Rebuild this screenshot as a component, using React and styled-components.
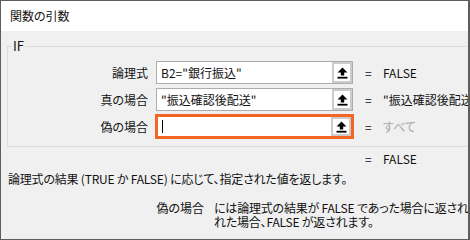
import React from "react";
import styled, { createGlobalStyle } from "styled-components";

const GlobalStyle = createGlobalStyle`
    body {
        margin: 0;
        background: #ffffff;
        font-family: "Noto Sans CJK JP", "Noto Sans", sans-serif;
        font-feature-settings: "palt";
        font-size: 12px;
        color: #111;
    }
`;

const Frame = styled.div`
    width: 470px;
    height: 240px;
    box-sizing: border-box;
    border: 1px solid #5e5e5e;
    border-right-width: 2px;
    background: #f0f0f0;
    overflow: hidden;
`;

const TitleBar = styled.div`
    height: 30px;
    display: flex;
    align-items: center;
    padding-left: 9px;
    background: #ffffff;
    font-size: 12px;
    line-height: 14px;
`;

const Body = styled.div`
    width: 620px;
    padding: 8px 0 0 6px;
`;

const Group = styled.fieldset`
    margin: 0;
    padding: 8px 0 4px 0;
    border: 1px solid #dcdcdc;
    min-width: 0;

    legend {
        margin-left: 4px;
        padding: 0 1px;
        font-size: 13px;
        line-height: 14px;
    }
`;

const Row = styled.div`
    display: flex;
    align-items: center;
    height: 23px;
    margin-bottom: 4px;
`;

const Label = styled.div`
    width: 140px;
    margin-right: 8px;
    text-align: right;
    line-height: 14px;
`;

const Field = styled.div`
    width: 197px;
    height: 23px;
    box-sizing: border-box;
    display: flex;
    background: #ffffff;
    border: ${(p) => (p.$active ? "2px solid #f26522" : "1px solid #adadad")};
    box-shadow: ${(p) => (p.$active ? "0 0 0 1px #f26522" : "none")};
`;

const FieldText = styled.div`
    flex: 1;
    display: flex;
    align-items: center;
    padding-left: 4px;
    white-space: nowrap;
    overflow: hidden;
    line-height: 14px;
`;

const Caret = styled.span`
    display: block;
    width: 1px;
    height: 13px;
    background: #000;
`;

const RefButton = styled.div`
    width: 20px;
    background: #cccccc;
    padding: 2px;
    box-sizing: border-box;

    span {
        display: flex;
        align-items: center;
        justify-content: center;
        height: 100%;
        background: #ffffff;
    }
`;

const Eq = styled.div`
    width: 18px;
    margin-left: ${(p) => (p.$flush ? "0" : "12px")};
    line-height: 14px;
`;

const Value = styled.div`
    white-space: nowrap;
    line-height: 14px;
    color: ${(p) => (p.$muted ? "#a8a8a8" : "#111")};
`;

const ResultRow = styled.div`
    display: flex;
    height: 14px;
    margin-top: 5px;
    padding-left: 358px;
    line-height: 14px;
`;

const Description = styled.div`
    margin-top: 6px;
    padding-left: 1px;
    white-space: nowrap;
    line-height: 14px;
    letter-spacing: -0.2px;
`;

const ArgHelp = styled.div`
    display: grid;
    grid-template-columns: 197px auto;
    column-gap: 10px;
    margin-top: 15px;
    line-height: 14px;
    white-space: nowrap;

    .name {
        text-align: right;
    }
    .text {
        letter-spacing: -0.2px;
    }
`;

function RefIcon() {
    return (
        <svg width="11" height="12" viewBox="0 0 11 12">
            <polygon points="5.5,0.5 10.5,5.5 7.2,5.5 7.2,8.5 3.8,8.5 3.8,5.5 0.5,5.5" fill="#000" />
            <rect x="0.5" y="9.8" width="10" height="1.8" fill="#000" />
        </svg>
    );
}

const args = [
    { label: "論理式", text: 'B2="銀行振込"', value: "FALSE" },
    { label: "真の場合", text: '"振込確認後配送"', value: '"振込確認後配送"' },
    { label: "偽の場合", text: "", value: "すべて", active: true, muted: true },
];

export default function App() {
    return (
        <>
            <GlobalStyle />
            <Frame>
                <TitleBar>関数の引数</TitleBar>
                <Body>
                    <Group>
                        <legend>IF</legend>
                        {args.map((a) => (
                            <Row key={a.label}>
                                <Label>{a.label}</Label>
                                <Field $active={a.active}>
                                    <FieldText>
                                        {a.active ? <Caret /> : a.text}
                                    </FieldText>
                                    <RefButton>
                                        <span>
                                            <RefIcon />
                                        </span>
                                    </RefButton>
                                </Field>
                                <Eq>=</Eq>
                                <Value $muted={a.muted}>{a.value}</Value>
                            </Row>
                        ))}
                    </Group>
                    <ResultRow>
                        <Eq $flush>=</Eq>
                        <Value>FALSE</Value>
                    </ResultRow>
                    <Description>
                        論理式の結果 (TRUE か FALSE) に応じて、指定された値を返します。
                    </Description>
                    <ArgHelp>
                        <span className="name">偽の場合</span>
                        <span className="text">
                            には論理式の結果が FALSE であった場合に返される値を指定します。省略さ
                        </span>
                        <span />
                        <span className="text">れた場合、FALSE が返されます。</span>
                    </ArgHelp>
                </Body>
            </Frame>
        </>
    );
}
